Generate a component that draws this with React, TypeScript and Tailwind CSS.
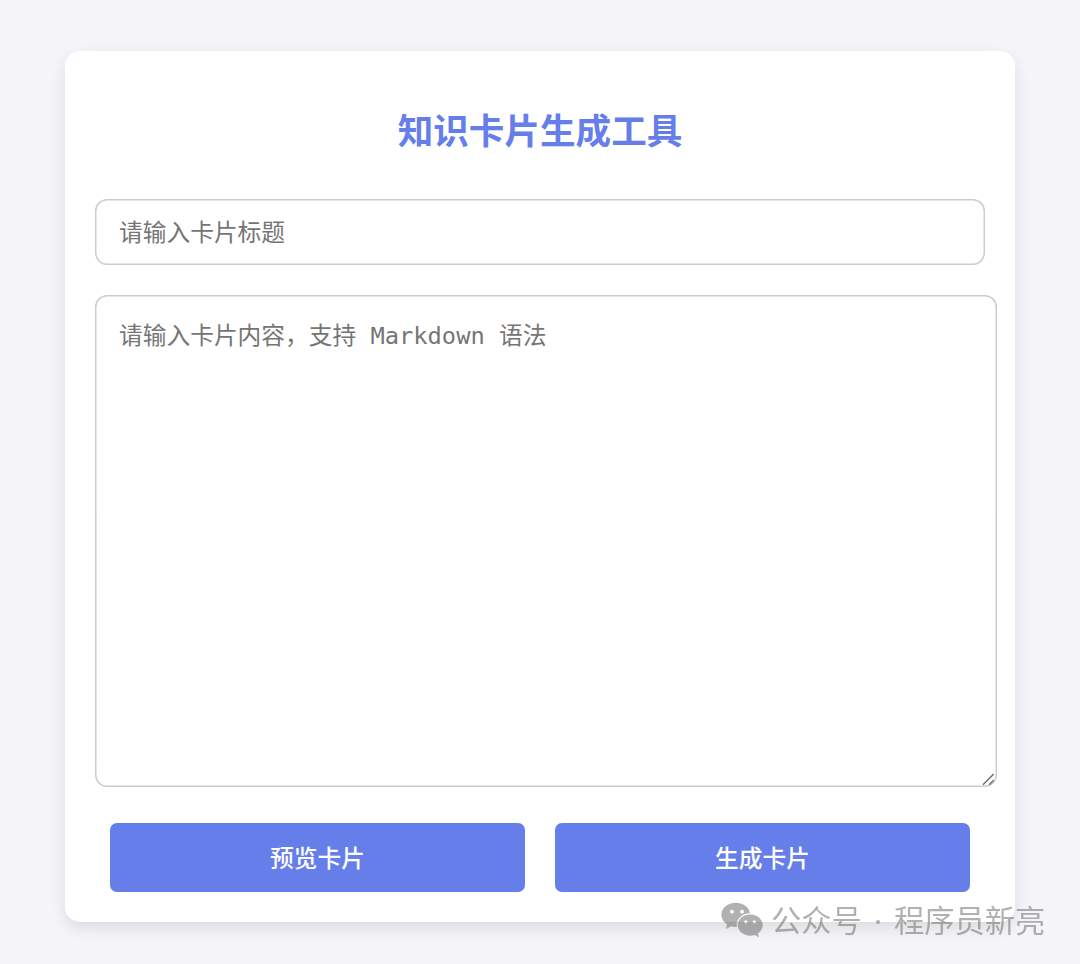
import { useState } from 'react'

const FONT = "font-['Noto_Sans_CJK_SC',sans-serif]"
const MONO = "font-['DejaVu_Sans_Mono','Noto_Sans_CJK_SC',monospace]"

function ResizeHandle() {
    return (
        <svg className="absolute right-[1px] bottom-[1px] w-[14px] h-[14px] pointer-events-none" viewBox="0 0 14 14" fill="none">
            <path d="M1 12.7L11.7 2M7 12.7L11.7 8.3" stroke="#6b6b6b" strokeWidth="1.4" />
        </svg>
    )
}

function WechatIcon() {
    return (
        <svg className="mt-[2px] w-[42px] h-[36px]" viewBox="0 0 42 36">
            <mask id="back-bubble">
                <rect width="42" height="36" fill="#fff" />
                <circle cx="11" cy="9.7" r="1.9" fill="#000" />
                <circle cx="21" cy="9.7" r="1.9" fill="#000" />
                <ellipse cx="29.2" cy="23" rx="13.5" ry="11.7" fill="#000" />
            </mask>
            <mask id="front-bubble">
                <rect width="42" height="36" fill="#fff" />
                <circle cx="24.8" cy="19.8" r="1.6" fill="#000" />
                <circle cx="33.4" cy="19.8" r="1.6" fill="#000" />
            </mask>
            <g fill="currentColor">
                <path
                    mask="url(#back-bubble)"
                    d="M14.8 0.8C6.8 0.8 0.4 6.1 0.4 12.9C0.4 16.8 2.6 20.2 6 22.3L5 27L10.2 24.3C11.7 24.7 13.2 24.9 14.8 24.9C22.8 24.9 29.2 19.7 29.2 12.9C29.2 6.1 22.8 0.8 14.8 0.8Z"
                />
                <path
                    mask="url(#front-bubble)"
                    d="M29.2 12.4C22.3 12.4 16.7 17.1 16.7 23C16.7 28.9 22.3 33.7 29.2 33.7C30.8 33.7 32.3 33.4 33.7 33L38 35.2L37 31.4C39.9 29.5 41.7 26.4 41.7 23C41.7 17.1 36.1 12.4 29.2 12.4Z"
                />
            </g>
        </svg>
    )
}

function Watermark() {
    return (
        <div className="absolute left-[721px] top-[898px] flex items-center h-[42px] text-[30.3px] leading-[42px] text-[#666] opacity-50 whitespace-nowrap">
            <WechatIcon />
            <span className="ml-[8px]">公众号</span>
            <span className="flex w-[32px] justify-center">
                <span className="mt-[5px] h-[4px] w-[4px] rounded-full bg-[#666]" />
            </span>
            <span>程序员新亮</span>
        </div>
    )
}

export default function App() {
    const [title, setTitle] = useState('')
    const [content, setContent] = useState('')

    return (
        <div className={`relative h-[964px] w-[1080px] overflow-hidden bg-[#f4f4f9] px-[65px] pt-[51px] ${FONT}`}>
            <div className="h-[871px] w-[950px] rounded-[15px] bg-white px-[30px] pt-[52px] shadow-[0_6px_15px_rgba(0,0,0,0.1)]">
                <h1 className="text-center text-[35.6px] leading-[52px] font-bold text-[#667eea]">知识卡片生成工具</h1>

                <input
                    type="text"
                    value={title}
                    onChange={(e) => setTitle(e.target.value)}
                    placeholder="请输入卡片标题"
                    className="mt-[44px] block h-[66px] w-[890px] rounded-[12px] px-[24px] pb-[4px] text-[23.73px] outline-none shadow-[inset_0_0_0_1.5px_#ccc] placeholder:text-[#757575]"
                />

                <div className="relative mt-[30px] h-[492px] w-[902px]">
                    <textarea
                        value={content}
                        onChange={(e) => setContent(e.target.value)}
                        placeholder="请输入卡片内容，支持 Markdown 语法"
                        className={`block h-full w-full resize-none rounded-[12px] px-[24px] pt-[24px] text-[23.73px] leading-[34px] outline-none shadow-[inset_0_0_0_1.5px_#ccc] placeholder:text-[#757575] ${MONO}`}
                    />
                    <ResizeHandle />
                </div>

                <div className="mt-[36px] flex gap-[30px] px-[15px] text-[23.73px] font-medium text-white">
                    <button className="h-[69px] flex-1 rounded-[7px] bg-[#667eea] pb-[2px]">预览卡片</button>
                    <button className="h-[69px] flex-1 rounded-[7px] bg-[#667eea] pb-[2px]">生成卡片</button>
                </div>
            </div>
            <Watermark />
        </div>
    )
}
